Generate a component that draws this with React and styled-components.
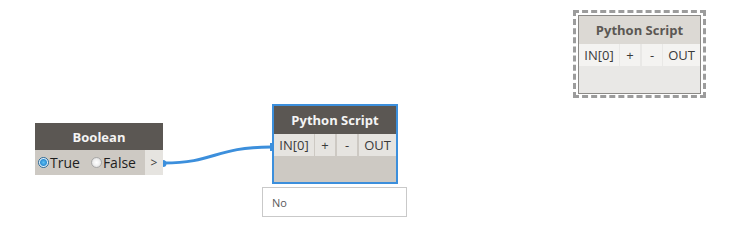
import React from 'react';
import styled, { createGlobalStyle } from 'styled-components';

const GlobalStyle = createGlobalStyle`
  html, body {
    margin: 0;
    padding: 0;
    background: #ffffff;
  }
  body {
    font-family: 'Open Sans', 'Noto Sans', sans-serif;
  }
`;

const Canvas = styled.div`
  position: relative;
  width: 738px;
  height: 248px;
  overflow: hidden;
  background: #ffffff;
`;

const Wires = styled.svg`
  position: absolute;
  left: 0;
  top: 0;
  pointer-events: none;
`;

const Node = styled.div`
  position: absolute;
  left: ${p => p.x}px;
  top: ${p => p.y}px;
  width: ${p => p.w}px;
  display: flex;
  flex-direction: column;
  box-sizing: border-box;
  background: ${p => (p.ghost ? '#e9e8e6' : '#cdc9c3')};
  border: ${p =>
    p.selected ? '2px solid #3c8fdc' : p.ghost ? '1px solid #8c8a87' : 'none'};
`;

const Header = styled.div`
  height: ${p => p.h}px;
  display: flex;
  align-items: center;
  justify-content: center;
  background: ${p => (p.ghost ? '#dcd9d4' : '#5b5753')};
  color: ${p => (p.ghost ? '#5b5753' : '#f4f4f4')};
  font-size: 13px;
  font-weight: 700;
`;

const PortRow = styled.div`
  display: flex;
  height: ${p => p.h}px;
`;

const Port = styled.div`
  width: ${p => p.w}px;
  display: flex;
  align-items: center;
  justify-content: center;
  background: ${p => (p.ghost ? '#f4f3f1' : '#e6e4e0')};
  color: #3a3a3a;
  font-size: 13px;
  margin-left: ${p => p.ml || 0}px;
`;

const Spacer = styled.div`
  flex: 1;
`;

const RadioGroup = styled.div`
  flex: 1;
  display: flex;
  align-items: center;
  padding-left: 3px;
  gap: 11px;
  font-size: 14px;
  color: #1e1e1e;
`;

const RadioLabel = styled.span`
  display: flex;
  align-items: center;
`;

const Radio = styled.span`
  width: 11px;
  height: 11px;
  box-sizing: border-box;
  border-radius: 50%;
  margin-right: 1px;
  border: 1px solid ${p => (p.checked ? '#2d6a97' : '#a8a8a8')};
  background: ${p =>
    p.checked
      ? 'radial-gradient(circle, #5fc1f2 0, #2f8fd4 3px, #dff1fb 4px, #e9f3f9 5px)'
      : 'radial-gradient(circle, #ffffff 0, #f0f0f0 3px, #dddddd 5px)'};
`;

const OutPort = styled.div`
  width: 18px;
  display: flex;
  align-items: center;
  justify-content: center;
  background: #e6e4e0;
  color: #3a3a3a;
  font-size: 12px;
`;

const Preview = styled.div`
  position: absolute;
  left: ${p => p.x}px;
  top: ${p => p.y}px;
  width: 145px;
  height: 30px;
  box-sizing: border-box;
  border: 1px solid #c9c9c9;
  background: #ffffff;
  color: #5a5a5a;
  font-size: 11px;
  display: flex;
  align-items: center;
  padding-left: 9px;
`;

const Ghost = styled.div`
  position: absolute;
  left: 573px;
  top: 10px;
  width: 133px;
  height: 88px;
  box-sizing: border-box;
  border: 3px dashed #9c9c9c;
  padding: 2px;
`;

const GhostInner = styled(Node)`
  position: static;
  height: 79px;
`;

export default function App() {
  return (
    <Canvas>
      <GlobalStyle />
      <Wires width="738" height="248">
        <path
          d="M164 163 C 215 163, 215 147, 271 147"
          fill="none"
          stroke="#3c8fdc"
          strokeWidth="3"
        />
        <path d="M163 160 a3 3 0 0 1 0 7 z" fill="#3c8fdc" />
        <rect x="270" y="143" width="2" height="8" fill="#3c8fdc" />
      </Wires>

      <Node x={35} y={123} w={128}>
        <Header h={27}>Boolean</Header>
        <PortRow h={25}>
          <RadioGroup>
            <RadioLabel>
              <Radio checked />
              True
            </RadioLabel>
            <RadioLabel>
              <Radio />
              False
            </RadioLabel>
          </RadioGroup>
          <OutPort>&gt;</OutPort>
        </PortRow>
      </Node>

      <Node x={272} y={104} w={126} selected style={{ height: 80 }}>
        <Header h={28}>Python Script</Header>
        <PortRow h={22}>
          <Port w={40}>IN[0]</Port>
          <Port w={20} ml={1}>+</Port>
          <Port w={20} ml={2}>-</Port>
          <Spacer />
          <Port w={37}>OUT</Port>
        </PortRow>
      </Node>

      <Preview x={262} y={187}>No</Preview>

      <Ghost>
        <GhostInner w={123} ghost>
          <Header h={28} ghost>Python Script</Header>
          <PortRow h={22}>
            <Port w={40} ghost>IN[0]</Port>
            <Port w={20} ml={1} ghost>+</Port>
            <Port w={20} ml={2} ghost>-</Port>
            <Spacer />
            <Port w={37} ghost>OUT</Port>
          </PortRow>
        </GhostInner>
      </Ghost>
    </Canvas>
  );
}
